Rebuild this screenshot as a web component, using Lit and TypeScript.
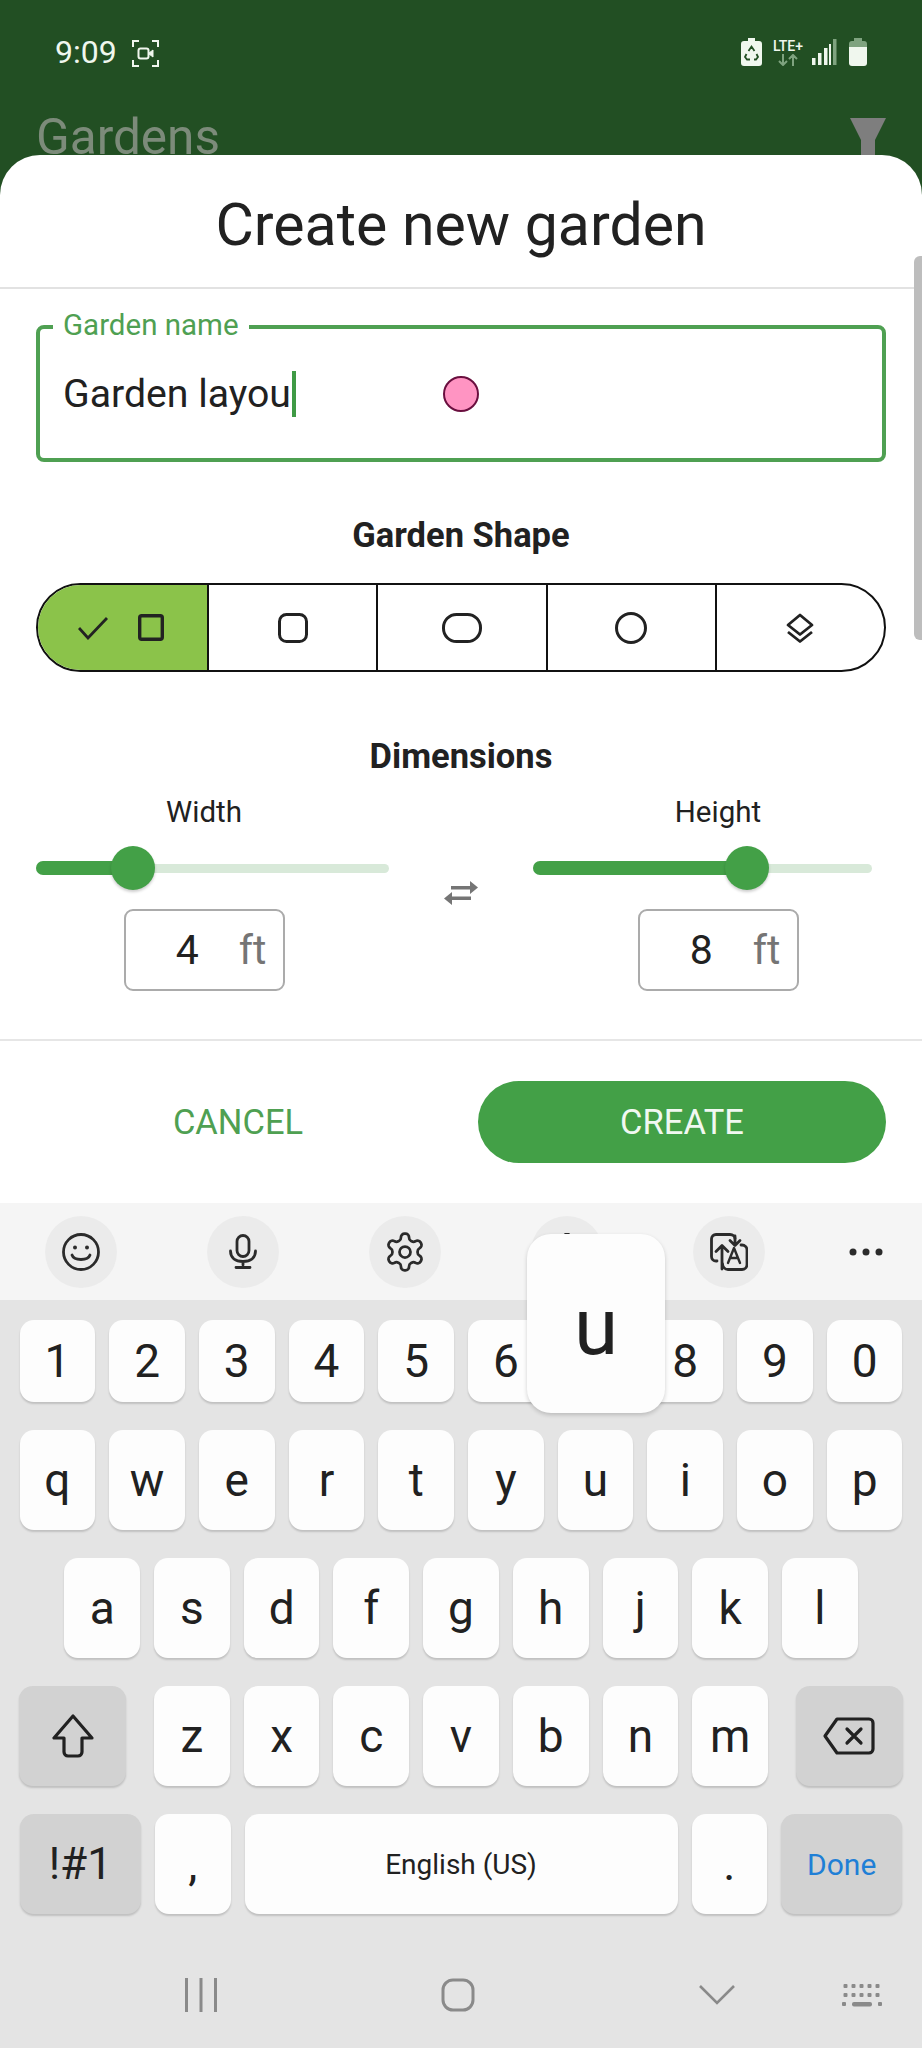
import { LitElement, html, svg, css } from 'lit';
import { customElement, property } from 'lit/decorators.js';

// one dimension column: label, slider, number box
@customElement('dimension-control')
class DimensionControl extends LitElement {
  static styles = css`
    :host {
      display: block;
      width: 334px;
    }
    .label {
      height: 36px;
      line-height: 36px;
      margin-top: 18px;
      text-align: center;
      font-size: 29.5px;
      color: #212121;
    }
    .slider {
      position: relative;
      height: 44px;
      margin-top: 16px;
    }
    :host([side='left']) .slider {
      margin-left: -1px;
      margin-right: -18px;
    }
    :host([side='right']) .slider {
      margin-left: -18px;
      margin-right: 13px;
    }
    .track {
      position: absolute;
      left: 0;
      right: 0;
      top: 18px;
      height: 9px;
      border-radius: 5px;
      background: #d8e9d9;
    }
    .fill {
      position: absolute;
      left: 0;
      top: 15px;
      height: 14px;
      border-radius: 7px 0 0 7px;
      background: #43a047;
    }
    .thumb {
      position: absolute;
      top: 0;
      width: 44px;
      height: 44px;
      margin-left: -22px;
      border-radius: 50%;
      background: #43a047;
      box-shadow: 0 2px 3px rgba(0, 0, 0, 0.2);
    }
    .box {
      box-sizing: border-box;
      width: 161px;
      height: 82px;
      margin: 19px auto 0;
      padding-right: 16px;
      display: flex;
      align-items: center;
      justify-content: flex-end;
      gap: 40px;
      border: 2px solid #ababab;
      border-radius: 9px;
      font-size: 41px;
      color: #212121;
    }
    .unit {
      color: #757575;
    }
  `;

  @property() label = '';
  @property() side = 'left';
  @property({ type: Number }) value = 0;
  @property({ type: Number }) pct = 0;

  render() {
    return html`
      <div class="label">${this.label}</div>
      <div class="slider">
        <div class="track"></div>
        <div class="fill" style="width:${this.pct}%"></div>
        <div class="thumb" style="left:${this.pct}%"></div>
      </div>
      <div class="box"><span>${this.value}</span><span class="unit">ft</span></div>
    `;
  }
}

@customElement('app-root')
class AppRoot extends LitElement {
  static styles = css`
    :host {
      display: block;
      position: relative;
      width: 922px;
      height: 2048px;
      overflow: hidden;
      background: #224f23;
      font-family: Roboto, 'Liberation Sans', sans-serif;
    }
    svg {
      display: block;
      flex: none;
    }

    /* top of the page behind the sheet */
    .header {
      height: 155px;
      overflow: hidden;
    }
    .status {
      height: 40px;
      padding: 32px 55px 0;
      display: flex;
      align-items: center;
      color: #f0f7ee;
    }
    .time {
      font-size: 32px;
      margin-right: 15px;
    }
    .screen-rec {
      margin-top: 2px;
    }
    .status-right {
      margin-left: auto;
      display: flex;
      align-items: center;
    }
    .net {
      width: 32px;
      margin: 0 8px 0 10px;
      text-align: center;
    }
    .net-text {
      font-size: 14px;
      line-height: 14px;
      font-weight: 500;
      white-space: nowrap;
    }
    .net-arrows {
      margin: 1px auto 0;
    }
    .battery {
      margin-left: 12px;
    }
    .appbar {
      margin-top: 37px;
      padding: 0 36px 0 36px;
      display: flex;
      justify-content: space-between;
    }
    .appbar-title {
      font-size: 49.5px;
      line-height: 56px;
      color: #7c8b7a;
    }
    .funnel {
      margin-top: 9px;
    }

    /* bottom sheet */
    .sheet {
      position: relative;
      box-sizing: border-box;
      height: 1048px;
      background: #fff;
      border-radius: 40px 40px 0 0;
    }
    .scrollbar {
      position: absolute;
      right: 0;
      top: 101px;
      width: 8px;
      height: 384px;
      background: #bdbdbd;
      border-radius: 6px 0 0 6px;
    }
    .sheet-title {
      box-sizing: border-box;
      height: 134px;
      padding-top: 6px;
      display: flex;
      align-items: center;
      justify-content: center;
      border-bottom: 2px solid #e2e2e2;
      font-size: 59px;
      color: #212121;
    }
    .form {
      padding: 0 36px;
    }
    .field {
      position: relative;
      box-sizing: border-box;
      height: 137px;
      margin-top: 36px;
      padding: 0 23px;
      display: flex;
      align-items: center;
      border: 4px solid #4fa052;
      border-radius: 8px;
      font-size: 39.2px;
      color: #212121;
    }
    .field-label {
      position: absolute;
      left: 13px;
      top: -22px;
      padding: 0 10px;
      background: #fff;
      font-size: 29.5px;
      line-height: 36px;
      color: #4fa052;
    }
    .caret {
      width: 4px;
      height: 46px;
      margin-left: 1px;
      background: #3f9a45;
    }
    .touch-dot {
      position: absolute;
      left: 403px;
      top: 47px;
      box-sizing: border-box;
      width: 36px;
      height: 36px;
      border-radius: 50%;
      background: #ff94c2;
      border: 2px solid #6a0f3f;
    }
    .section-title {
      height: 40px;
      line-height: 40px;
      text-align: center;
      font-size: 34.5px;
      font-weight: 700;
      color: #212121;
    }
    .shape-title {
      margin-top: 53px;
    }
    .dim-title {
      margin-top: 64px;
    }
    .segments {
      box-sizing: border-box;
      height: 89px;
      margin-top: 28px;
      display: flex;
      border: 2px solid #111;
      border-radius: 45px;
      overflow: hidden;
    }
    .segment {
      box-sizing: border-box;
      width: 20%;
      display: flex;
      align-items: center;
      justify-content: center;
      gap: 30px;
      border-left: 2px solid #111;
    }
    .segment:first-child {
      padding-right: 4px;
      border-left: none;
      background: #8bc34a;
    }
    .dims {
      padding: 0 1px;
      display: flex;
      justify-content: space-between;
      align-items: flex-start;
    }
    .swap {
      margin-top: 105px;
    }
    .divider {
      height: 2px;
      margin-top: 48px;
      background: #e6e6e6;
    }
    .actions {
      padding: 40px 36px 0;
      display: grid;
      grid-template-columns: 404px 408px;
      gap: 38px;
    }
    .btn {
      height: 82px;
      display: flex;
      align-items: center;
      justify-content: center;
      font-size: 34.5px;
      color: #4fa052;
    }
    .btn.primary {
      background: #43a047;
      border-radius: 41px;
      color: #f1f8f1;
    }

    /* samsung keyboard */
    .keyboard {
      position: relative;
      height: 845px;
      background: #e4e4e4;
    }
    .toolbar {
      height: 97px;
      padding-left: 45px;
      display: flex;
      align-items: center;
      gap: 90px;
      box-sizing: border-box;
      background: #f5f5f5;
    }
    .tool {
      width: 72px;
      height: 72px;
      display: flex;
      align-items: center;
      justify-content: center;
      border-radius: 50%;
      background: #ebebeb;
    }
    .tool.more {
      background: none;
      margin-left: -25px;
    }
    .rows {
      padding: 20px 19px 0;
      display: flex;
      flex-direction: column;
      gap: 28px;
    }
    .row {
      height: 100px;
      display: flex;
      justify-content: center;
      gap: 14px;
    }
    .row.numbers {
      height: 82px;
    }
    .key {
      width: 75.7px;
      flex: none;
      display: flex;
      align-items: center;
      justify-content: center;
      border-radius: 14px;
      background: #fdfdfd;
      box-shadow: 0 2px 2px rgba(0, 0, 0, 0.16);
      font-size: 46px;
      color: #212121;
    }
    .key.fn {
      background: #d2d2d2;
    }
    .key.shift {
      width: 107px;
      margin-right: 14px;
    }
    .key.back {
      width: 107px;
      margin-left: 14px;
    }
    .key.sym {
      width: 121px;
      font-size: 44px;
    }
    .key.space {
      width: 433px;
      font-size: 28px;
    }
    .key.done {
      width: 121px;
      font-size: 30px;
      color: #1f7fd6;
    }
    .popup {
      position: absolute;
      left: 527px;
      top: 31px;
      box-sizing: border-box;
      width: 138px;
      height: 179px;
      padding-top: 6px;
      display: flex;
      align-items: center;
      justify-content: center;
      border-radius: 24px;
      background: #fdfdfd;
      box-shadow: 0 2px 4px rgba(0, 0, 0, 0.18);
      font-size: 80px;
      color: #212121;
    }
    .nav {
      height: 136px;
      padding: 26px 0 0 185px;
      box-sizing: border-box;
      display: flex;
      align-items: center;
      gap: 224px;
    }
    .nav-keys {
      margin-left: -117px;
    }
  `;

  private renderScreenRecord() {
    return html`<svg class="screen-rec" width="27" height="27" viewBox="0 0 27 27" fill="none" stroke="#f0f7ee">
      <path d="M1 7V1h6M20 1h6v6M1 20v6h6M26 20v6h-6" stroke-width="2" />
      <rect x="6.5" y="8.5" width="10" height="10" rx="2" stroke-width="2" />
      <path d="M17 13l4-3v7l-4-3z" fill="#f0f7ee" stroke-width="1" />
    </svg>`;
  }

  private renderStatusRight() {
    return html`<div class="status-right">
      <svg width="21" height="28" viewBox="0 0 21 28">
        <path d="M7 0h7v3h4a3 3 0 0 1 3 3v19a3 3 0 0 1-3 3H3a3 3 0 0 1-3-3V6a3 3 0 0 1 3-3h4z" fill="#f0f7ee" />
        <path d="M7.500 13l3-4.500 3 4.500M5.500 16l-1.500 3 2 2.500h3M15.500 16l1.500 3-2 2.500h-2" fill="none" stroke="#224f23" stroke-width="1.800" />
      </svg>
      <div class="net">
        <div class="net-text">LTE+</div>
        <svg class="net-arrows" width="20" height="12" viewBox="0 0 20 12" fill="none" stroke="#7fa37f" stroke-width="2">
          <path d="M5 0v11M1 7l4 4 4-4M15 12V1M11 5l4-4 4 4" />
        </svg>
      </div>
      <svg width="25" height="26" viewBox="0 0 25 26">
        <rect x="0" y="19" width="3.500" height="7" fill="#f0f7ee" />
        <rect x="6" y="14" width="3.500" height="12" fill="#f0f7ee" />
        <rect x="12" y="9" width="3.500" height="17" fill="#f0f7ee" />
        <rect x="17" y="5" width="2" height="21" fill="#f0f7ee" />
        <rect x="21" y="0" width="3.500" height="26" fill="#7fa37f" />
      </svg>
      <svg class="battery" width="18" height="28" viewBox="0 0 18 28">
        <path d="M5 0h8v3h2a3 3 0 0 1 3 3v3H0V6a3 3 0 0 1 3-3h2z" fill="#7fa37f" />
        <path d="M0 9h18v16a3 3 0 0 1-3 3H3a3 3 0 0 1-3-3z" fill="#f0f7ee" />
      </svg>
    </div>`;
  }

  private renderFunnel() {
    return html`<svg class="funnel" width="36" height="46" viewBox="0 0 36 46">
      <path d="M0 0h36L25 22v24H11V22z" fill="#7e7e7e" />
    </svg>`;
  }

  private renderSegments() {
    const ink = '#222';
    return html`<div class="segments">
      <div class="segment">
        <svg width="30" height="24" viewBox="0 0 30 24" fill="none" stroke="${ink}" stroke-width="2.800">
          <path d="M1 12l9 10L29 2" />
        </svg>
        <svg width="26" height="27" viewBox="0 0 26 27" fill="none" stroke="${ink}" stroke-width="3.400">
          <rect x="1.700" y="1.700" width="22.600" height="23.600" rx="2" />
        </svg>
      </div>
      <div class="segment">
        <svg width="30" height="30" viewBox="0 0 30 30" fill="none" stroke="${ink}" stroke-width="3">
          <rect x="1.500" y="1.500" width="27" height="27" rx="7" />
        </svg>
      </div>
      <div class="segment">
        <svg width="40" height="30" viewBox="0 0 40 30" fill="none" stroke="${ink}" stroke-width="3">
          <rect x="1.500" y="1.500" width="37" height="27" rx="13" />
        </svg>
      </div>
      <div class="segment">
        <svg width="32" height="32" viewBox="0 0 32 32" fill="none" stroke="${ink}" stroke-width="3">
          <circle cx="16" cy="16" r="14.500" />
        </svg>
      </div>
      <div class="segment">
        <svg width="30" height="30" viewBox="0 0 30 30" fill="none" stroke="${ink}" stroke-width="2.800" stroke-linejoin="round">
          <path d="M15 2l12 10-12 9.500L3 12z" />
          <path d="M3 19l12 9.500L27 19" />
        </svg>
      </div>
    </div>`;
  }

  private renderToolbar() {
    const ink = '#2b2b2b';
    return html`<div class="toolbar">
      <div class="tool">
        <svg width="38" height="38" viewBox="0 0 38 38" fill="none" stroke="${ink}" stroke-width="2.800">
          <circle cx="19" cy="19" r="17.500" />
          <path d="M10 22c2 6 16 6 18 0" stroke-linecap="round" />
          <circle cx="13" cy="14.500" r="2" fill="${ink}" stroke="none" />
          <circle cx="25" cy="14.500" r="2" fill="${ink}" stroke="none" />
        </svg>
      </div>
      <div class="tool">
        <svg width="28" height="35" viewBox="0 0 28 35" fill="none" stroke="${ink}" stroke-width="2.800" stroke-linecap="round">
          <rect x="8" y="1.500" width="12" height="21" rx="6" />
          <path d="M1.500 17c0 7 5 10.500 12.500 10.500S26.500 24 26.500 17M14 28v3M7 33.500h14" />
        </svg>
      </div>
      <div class="tool">
        <svg width="44" height="44" viewBox="0 0 24 24" fill="none" stroke="${ink}" stroke-width="1.500">
          <path d="M12.220 2h-.44a2 2 0 0 0-2 2v.18a2 2 0 0 1-1 1.730l-.43.25a2 2 0 0 1-2 0l-.15-.08a2 2 0 0 0-2.730.73l-.22.38a2 2 0 0 0 .73 2.730l.15.1a2 2 0 0 1 1 1.720v.51a2 2 0 0 1-1 1.740l-.15.09a2 2 0 0 0-.73 2.730l.22.38a2 2 0 0 0 2.730.73l.15-.08a2 2 0 0 1 2 0l.43.25a2 2 0 0 1 1 1.730V20a2 2 0 0 0 2 2h.44a2 2 0 0 0 2-2v-.18a2 2 0 0 1 1-1.730l.43-.25a2 2 0 0 1 2 0l.15.08a2 2 0 0 0 2.730-.73l.22-.39a2 2 0 0 0-.73-2.730l-.15-.08a2 2 0 0 1-1-1.740v-.5a2 2 0 0 1 1-1.740l.15-.09a2 2 0 0 0 .73-2.730l-.22-.38a2 2 0 0 0-2.730-.73l-.15.08a2 2 0 0 1-2 0l-.43-.25a2 2 0 0 1-1-1.730V4a2 2 0 0 0-2-2z" />
          <circle cx="12" cy="12" r="3" />
        </svg>
      </div>
      <div class="tool">
        <svg width="30" height="37" viewBox="0 0 30 37" fill="none" stroke="${ink}" stroke-width="2.800">
          <rect x="2" y="6" width="26" height="29" rx="4" />
          <circle cx="15" cy="2" r="1.500" fill="${ink}" />
        </svg>
      </div>
      <div class="tool">
        <svg width="38" height="38" viewBox="0 0 38 38" fill="none" stroke="${ink}" stroke-width="2.800" stroke-linecap="round" stroke-linejoin="round">
          <path d="M7 28H6a4.500 4.500 0 0 1-4.500-4.500V6A4.500 4.500 0 0 1 6 1.500h14c3 0 5 2 5 4" />
          <path d="M25 3v9M20 7.500l5 5 5-5" />
          <path d="M12 36V13M6 18.500l6-6 6 6" />
          <path d="M12.500 31c0 3 2.500 5.500 5.500 5.500h14a5 5 0 0 0 5-5V17a5 5 0 0 0-5-5h-1" />
          <path d="M18 30l6-15 6 15M20.500 25h7" stroke-width="2.400" />
        </svg>
      </div>
      <div class="tool more">
        <svg width="34" height="8" viewBox="0 0 34 8" fill="${ink}">
          <circle cx="4" cy="4" r="3.500" />
          <circle cx="17" cy="4" r="3.500" />
          <circle cx="30" cy="4" r="3.500" />
        </svg>
      </div>
    </div>`;
  }

  private renderKeys(keys: string[]) {
    return keys.map((k) => html`<div class="key">${k}</div>`);
  }

  private renderRows() {
    const ink = '#212121';
    return html`<div class="rows">
      <div class="row numbers">${this.renderKeys('1234567890'.split(''))}</div>
      <div class="row">${this.renderKeys('qwertyuiop'.split(''))}</div>
      <div class="row">${this.renderKeys('asdfghjkl'.split(''))}</div>
      <div class="row">
        <div class="key fn shift">
          <svg width="42" height="44" viewBox="0 0 42 44" fill="none" stroke="${ink}" stroke-width="3.200" stroke-linejoin="round">
            <path d="M21 2L2 24h10v14a4 4 0 0 0 4 4h10a4 4 0 0 0 4-4V24h10z" />
          </svg>
        </div>
        ${this.renderKeys('zxcvbnm'.split(''))}
        <div class="key fn back">
          <svg width="52" height="38" viewBox="0 0 52 38" fill="none" stroke="${ink}" stroke-width="3.200" stroke-linejoin="round" stroke-linecap="round">
            <path d="M14 2h32a4 4 0 0 1 4 4v26a4 4 0 0 1-4 4H14L2 19z" />
            <path d="M24 12l14 14M38 12L24 26" />
          </svg>
        </div>
      </div>
      <div class="row">
        <div class="key fn sym">!#1</div>
        <div class="key">,</div>
        <div class="key space">English (US)</div>
        <div class="key">.</div>
        <div class="key fn done">Done</div>
      </div>
    </div>`;
  }

  private renderNav() {
    return html`<div class="nav">
      <svg width="32" height="34" viewBox="0 0 32 34" fill="#8a8a8a">
        <rect x="0" y="0" width="3" height="34" />
        <rect x="14.500" y="0" width="3" height="34" />
        <rect x="29" y="0" width="3" height="34" />
      </svg>
      <svg width="34" height="34" viewBox="0 0 34 34" fill="none" stroke="#8a8a8a" stroke-width="3">
        <rect x="2" y="2" width="30" height="30" rx="10" />
      </svg>
      <svg width="36" height="20" viewBox="0 0 36 20" fill="none" stroke="#8a8a8a" stroke-width="2.600">
        <path d="M1 1l17 17L35 1" />
      </svg>
      <svg class="nav-keys" width="40" height="23" viewBox="0 0 40 23" fill="#8a8a8a">
        ${[0, 9].map((y) =>
          [1.5, 9.5, 17.5, 25.5, 33.5].map(
            (x) => svg`<rect x="${x}" y="${y}" width="4" height="4" rx="1"></rect>`
          )
        )}
        <rect x="0" y="18" width="4" height="4" rx="1"></rect>
        <rect x="10" y="18" width="20" height="4.500" rx="2"></rect>
        <rect x="36" y="18" width="4" height="4" rx="1"></rect>
      </svg>
    </div>`;
  }

  render() {
    return html`
      <div class="header">
        <div class="status">
          <span class="time">9:09</span>
          ${this.renderScreenRecord()} ${this.renderStatusRight()}
        </div>
        <div class="appbar">
          <div class="appbar-title">Gardens</div>
          ${this.renderFunnel()}
        </div>
      </div>

      <div class="sheet">
        <div class="sheet-title">Create new garden</div>
        <div class="form">
          <div class="field">
            <span class="field-label">Garden name</span>
            <span>Garden layou</span><span class="caret"></span>
            <span class="touch-dot"></span>
          </div>
          <div class="section-title shape-title">Garden Shape</div>
          ${this.renderSegments()}
          <div class="section-title dim-title">Dimensions</div>
          <div class="dims">
            <dimension-control label="Width" side="left" value="4" pct="27.5"></dimension-control>
            <svg class="swap" width="34" height="24" viewBox="0 0 34 24" fill="#757575">
              <path d="M7 5h19V0l8 6.500-8 6.500V8.500H7z" />
              <path d="M27 15.500H8V11l-8 6.500L8 24v-5h19z" />
            </svg>
            <dimension-control label="Height" side="right" value="8" pct="63"></dimension-control>
          </div>
        </div>
        <div class="divider"></div>
        <div class="actions">
          <div class="btn">CANCEL</div>
          <div class="btn primary">CREATE</div>
        </div>
        <div class="scrollbar"></div>
      </div>

      <div class="keyboard">
        ${this.renderToolbar()} ${this.renderRows()} ${this.renderNav()}
        <div class="popup">u</div>
      </div>
    `;
  }
}
